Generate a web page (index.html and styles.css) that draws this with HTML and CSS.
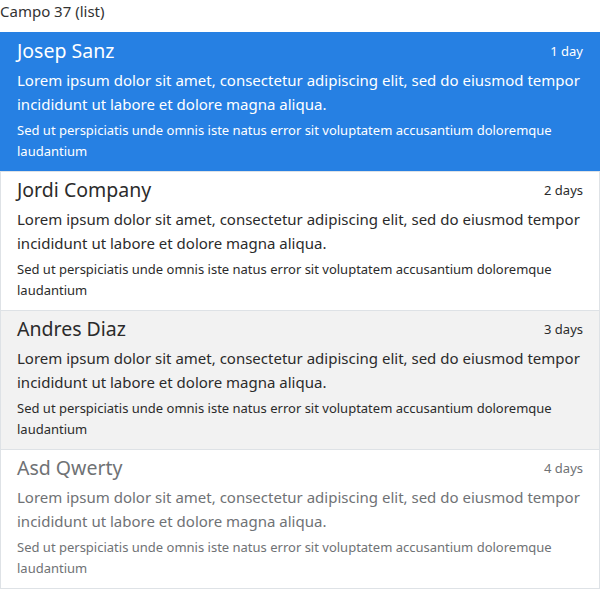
FILE: index.html
```html
<!DOCTYPE html>
<html lang="en">
<head>
<meta charset="utf-8">
<title>Campo 37 (list)</title>
<link rel="stylesheet" href="styles.css">
</head>
<body>
<div class="field">
  <div class="field-label">Campo 37 (list)</div>
  <div class="list-group">
    <a class="list-item active" href="#">
      <div class="item-head"><h5 class="item-title">Josep Sanz</h5><small class="item-time">1 day</small></div>
      <p class="item-text">Lorem ipsum dolor sit amet, consectetur adipiscing elit, sed do eiusmod tempor incididunt ut labore et dolore magna aliqua.</p>
      <small class="item-note">Sed ut perspiciatis unde omnis iste natus error sit voluptatem accusantium doloremque laudantium</small>
    </a>
    <a class="list-item" href="#">
      <div class="item-head"><h5 class="item-title">Jordi Company</h5><small class="item-time">2 days</small></div>
      <p class="item-text">Lorem ipsum dolor sit amet, consectetur adipiscing elit, sed do eiusmod tempor incididunt ut labore et dolore magna aliqua.</p>
      <small class="item-note">Sed ut perspiciatis unde omnis iste natus error sit voluptatem accusantium doloremque laudantium</small>
    </a>
    <a class="list-item hover" href="#">
      <div class="item-head"><h5 class="item-title">Andres Diaz</h5><small class="item-time">3 days</small></div>
      <p class="item-text">Lorem ipsum dolor sit amet, consectetur adipiscing elit, sed do eiusmod tempor incididunt ut labore et dolore magna aliqua.</p>
      <small class="item-note">Sed ut perspiciatis unde omnis iste natus error sit voluptatem accusantium doloremque laudantium</small>
    </a>
    <a class="list-item disabled" href="#">
      <div class="item-head"><h5 class="item-title">Asd Qwerty</h5><small class="item-time">4 days</small></div>
      <p class="item-text">Lorem ipsum dolor sit amet, consectetur adipiscing elit, sed do eiusmod tempor incididunt ut labore et dolore magna aliqua.</p>
      <small class="item-note">Sed ut perspiciatis unde omnis iste natus error sit voluptatem accusantium doloremque laudantium</small>
    </a>
  </div>
</div>
</body>
</html>
```
FILE: styles.css
```css
* { box-sizing: border-box; }
html, body { margin: 0; padding: 0; background: #fff; }
body {
  font-family: "Noto Sans", "Open Sans", sans-serif;
  font-size: 16px;
  line-height: 1.5;
  color: #2b2b2b;
}
.field-label {
  font-size: 15px;
  line-height: 22px;
  color: #333;
  margin-bottom: 10px;
}
.list-group {
  display: flex;
  flex-direction: column;
  border: 1px solid #dee2e6;
}
.list-item {
  display: block;
  padding: 7px 16px 9px;
  color: #2b2b2b;
  text-decoration: none;
  background: #fff;
  border-top: 1px solid #dee2e6;
}
.list-item:first-child { border-top: 0; }
.list-item.active {
  background: #2680e3;
  color: #fff;
  margin: -1px -1px 0;
  padding: 8px 17px 9px;
}
.list-item.hover { background: #f2f2f2; }
.list-item.disabled { color: #6f7275; }
.item-head {
  display: flex;
  justify-content: space-between;
  align-items: flex-start;
  margin-bottom: 6px;
}
.item-title {
  margin: 0;
  font-size: 19.5px;
  font-weight: 400;
  line-height: 22px;
}
.item-time {
  font-size: 13px;
  line-height: 22px;
}
.item-text {
  margin: 0 0 4px;
  font-size: 15px;
  line-height: 24px;
}
.item-note {
  display: block;
  font-size: 13px;
  line-height: 21px;
}
```
